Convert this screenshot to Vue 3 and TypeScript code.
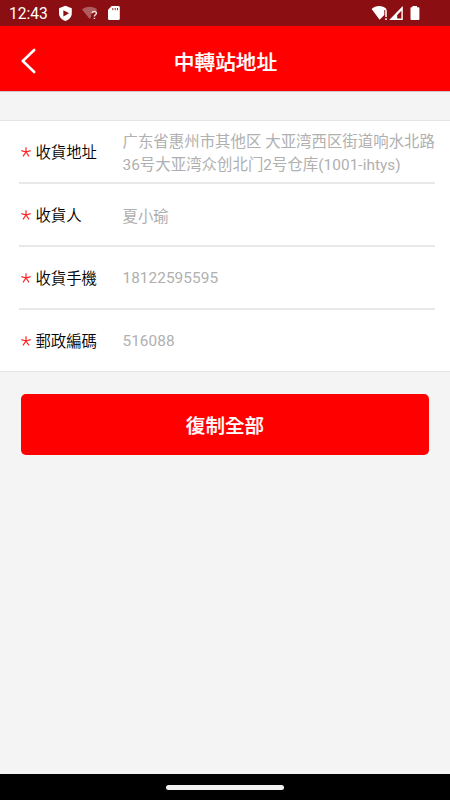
<script setup lang="ts">
interface Field {
  label: string
  lines: string[]
}

const fields: Field[] = [
  { label: '收貨地址', lines: ['广东省惠州市其他区 大亚湾西区街道响水北路', '36号大亚湾众创北门2号仓库(1001-ihtys)'] },
  { label: '收貨人', lines: ['夏小瑜'] },
  { label: '收貨手機', lines: ['18122595595'] },
  { label: '郵政編碼', lines: ['516088'] },
]
</script>

<template>
  <div class="screen">
    <div class="status">
      <span class="clock">12:43</span>
      <svg class="left-icons" width="64" height="26" viewBox="0 0 64 26">
        <path d="M8.4 5.8L14.8 8.2V13C14.8 17 12.2 19.6 8.4 21C4.6 19.6 2 17 2 13V8.2Z" fill="#fff" />
        <path d="M6.4 10.2V16.4L12 13.3Z" fill="#8b0e13" />
        <path d="M25 9.4C29 5.9 36 5.9 40.3 9.4L38.5 11.5C35.5 11.2 34.3 12.4 34.2 15V17L32.7 19Z" fill="#fff" opacity=".32" />
        <path d="M35.3 13.3C35.3 10.8 39.4 10.8 39.4 13.2C39.4 14.8 37.4 14.7 37.4 16.5M37.4 17.7V19.1" fill="none" stroke="#f4dede" stroke-width="1.5" />
        <path d="M54.7 6H61.4Q62.8 6 62.8 7.4V18.5Q62.8 20 61.4 20H52.4Q51 20 51 18.5V9.8Z" fill="#fff" />
        <path d="M55.8 8V10.2M58.2 8V10.2M60.5 8V10.2" stroke="#8b0e13" stroke-width=".9" />
      </svg>
      <span class="grow"></span>
      <svg class="right-icons" width="50" height="26" viewBox="0 0 50 26">
        <path d="M1.6 9C5.6 5 12.6 5 16.6 9L15.8 9.9H14.3V15L9.6 19.8Z" fill="#fff" />
        <path d="M16 10V17M16 18.2V20" stroke="#fff" stroke-width="1.5" />
        <path d="M32.8 6V20H19.2ZM31.4 10.8L27.2 15V18.6H31.4Z" fill="#fff" fill-rule="evenodd" />
        <path d="M42.4 6H47V7.2H48.6Q49.4 7.2 49.4 8V19Q49.4 20 48.6 20H41.4Q40.5 20 40.5 19V8Q40.5 7.2 41.4 7.2H42.4Z" fill="#fff" />
      </svg>
    </div>

    <header class="header">
      <svg class="back" width="18" height="28" viewBox="0 0 18 28">
        <path d="M14.2 3L2.8 14L14.2 25" fill="none" stroke="#fff" stroke-width="2.6" stroke-linecap="round" stroke-linejoin="round" />
      </svg>
      <h1 class="title">中轉站地址</h1>
    </header>

    <main class="content">
      <section class="card">
        <div v-for="field in fields" :key="field.label" class="row">
          <svg class="star" width="10" height="10" viewBox="0 0 10 10">
            <path d="M5 5V.2M5 5L.3 3.6M5 5L9.7 3.6M5 5L2 9.4M5 5L8 9.4" stroke="#ff2020" stroke-width="1.15" />
          </svg>
          <span class="label">{{ field.label }}</span>
          <div class="value">
            <div v-for="line in field.lines" :key="line">{{ line }}</div>
          </div>
        </div>
      </section>
      <button class="copy" type="button">復制全部</button>
    </main>

    <footer class="nav"><span class="handle"></span></footer>
  </div>
</template>

<style>
body {
  margin: 0;
}
</style>

<style scoped>
.screen {
  display: flex;
  flex-direction: column;
  width: 450px;
  height: 800px;
  overflow: hidden;
  background: #f4f4f4;
  font-family: Roboto, 'Noto Sans CJK TC', sans-serif;
}

.status {
  display: flex;
  box-sizing: border-box;
  height: 26px;
  padding: 0 30px 0 9px;
  background: #8b0e13;
  color: #fff;
}

.clock {
  width: 48px;
  font-size: 15.6px;
  line-height: 28px;
}

.grow {
  flex: 1;
}

.header {
  display: grid;
  grid-template-columns: 60px 1fr 60px;
  align-items: center;
  box-sizing: border-box;
  height: 66px;
  border-bottom: 1px solid #d2c4c4;
  background: #f00;
  color: #fff;
}

.back {
  margin: 5px 0 0 20px;
}

.title {
  margin: 8px 0 0 1px;
  font-size: 20.7px;
  font-weight: 500;
  line-height: 30px;
  text-align: center;
  -webkit-text-stroke: 0.2px #fff;
}

.content {
  flex: 1;
  padding-top: 28px;
}

.card {
  border-top: 1px solid #e4e4e4;
  border-bottom: 1px solid #e4e4e4;
  padding: 0 15px 0 19px;
  background: #fff;
}

.row {
  display: flex;
  align-items: center;
  box-sizing: border-box;
  height: 63px;
  border-bottom: 2px solid #e8e8e8;
  padding-left: 2px;
}

.row:last-child {
  height: 61px;
  border-bottom: 0;
}

.star {
  flex: none;
  margin: 0 4.4px 0 0;
}

.label {
  flex: none;
  width: 87.1px;
  margin-top: -1px;
  color: #000;
  font-size: 15.4px;
  font-weight: 350;
}

.value {
  display: grid;
  gap: 1px;
  padding-top: 0.5px;
  color: #b0b0b0;
  font-family: Roboto, 'Noto Sans CJK SC', sans-serif;
  font-size: 15.4px;
  letter-spacing: 0.04px;
  white-space: nowrap;
}

.copy {
  display: block;
  width: 408px;
  height: 61px;
  margin: 22px 0 0 21px;
  border: 0;
  border-radius: 5px;
  padding: 5px 0 0;
  background: #f00;
  color: #fff;
  font-family: inherit;
  font-size: 19.6px;
  font-weight: 500;
  line-height: 30px;
  -webkit-text-stroke: 0.2px #fff;
}

.nav {
  display: flex;
  align-items: center;
  justify-content: center;
  height: 26px;
  background: #000;
}

.handle {
  width: 118px;
  height: 5px;
  border-radius: 3px;
  background: #f1f1f1;
}
</style>
